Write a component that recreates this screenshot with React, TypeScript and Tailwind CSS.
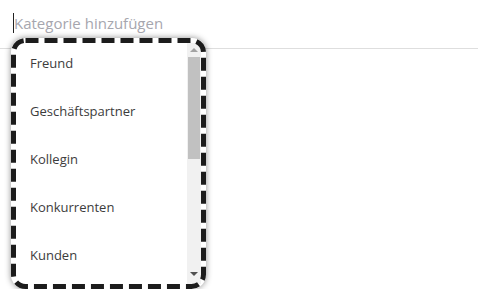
import React from 'react'

export default function App() {
  // categories shown in the dropdown
  const items = ['Freund', 'Geschäftspartner', 'Kollegin', 'Konkurrenten', 'Kunden']

  return (
    <div
      className="relative h-[289px] w-full overflow-hidden bg-white"
      style={{ fontFamily: '"Open Sans", "Noto Sans", sans-serif' }}
    >
      {/* Input */}
      <div className="flex h-[49px] items-start border-b border-[#dedede] pl-[13px] pt-[13px]">
        <div className="h-[20px] w-px bg-[#222]" />
        <span className="text-[15px] leading-[20px] text-[#a6a6ae]">Kategorie hinzufügen</span>
      </div>

      {/* Dropdown overlay */}
      <div className="absolute left-[11px] top-[38px] h-[251px] w-[195px] rounded-[14px] bg-white shadow-[0_0_6px_rgba(0,0,0,0.45)]">
        <div className="flex h-full overflow-hidden rounded-[12px] p-[5px]">
          <ul className="flex-1 overflow-hidden">
            {items.map((item) => (
              <li
                key={item}
                className="flex h-[48px] items-center pb-[6px] pl-[14px] text-[13px] text-[#3c3c3c]"
              >
                {item}
              </li>
            ))}
          </ul>
          {/* Scrollbar */}
          <div className="flex w-[14px] flex-col items-center bg-[#f1f1f1]">
            <div className="mt-[5px] h-0 w-0 border-x-[4px] border-b-[4px] border-x-transparent border-b-[#a3a3a3]" />
            <div className="mt-[5px] h-[102px] w-[12px] bg-[#c1c1c1]" />
            <div className="flex-1" />
            <div className="mb-[8px] h-0 w-0 border-x-[4px] border-t-[4px] border-x-transparent border-t-[#505050]" />
          </div>
        </div>
        {/* Dashed outline */}
        <svg className="pointer-events-none absolute inset-0" width="195" height="251">
          <rect
            x="2.5"
            y="2.5"
            width="190"
            height="246"
            rx="12"
            fill="none"
            stroke="#1c1c1c"
            strokeWidth="5"
            strokeDasharray="13 6"
          />
        </svg>
      </div>
    </div>
  )
}
